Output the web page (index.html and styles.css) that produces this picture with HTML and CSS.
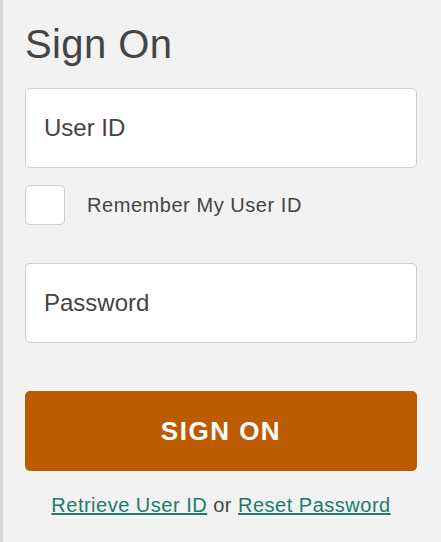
FILE: index.html
```html
<!DOCTYPE html>
<html lang="en">
<head>
  <meta charset="UTF-8">
  <meta name="viewport" content="width=device-width, initial-scale=1.0">
  <title>Sign On</title>
  <link rel="stylesheet" href="styles.css">
</head>
<body>
  <div class="signon">
    <h1>Sign On</h1>

    <input type="text" class="field" placeholder="User ID">

    <label class="remember">
      <input type="checkbox" class="check">
      <span>Remember My User ID</span>
    </label>

    <input type="password" class="field" placeholder="Password">

    <button class="submit">SIGN ON</button>

    <p class="links">
      <a href="#">Retrieve User ID</a> or <a href="#">Reset Password</a>
    </p>
  </div>
</body>
</html>
```

FILE: styles.css
```css
body {
  margin: 0;
  background: #f2f2f2;
  font-family: "Liberation Sans", Arial, sans-serif;
  color: #444;
}
.signon {
  min-height: 542px;
  box-sizing: border-box;
  border-left: 3px solid #d9d9d9;
  padding: 24px 24px 0 22px;
  display: flex;
  flex-direction: column;
}
h1 {
  margin: 0 0 24px;
  font-size: 40px;
  line-height: 40px;
  font-weight: normal;
  letter-spacing: 0.4px;
  color: #444;
}
.field {
  height: 80px;
  box-sizing: border-box;
  border: 1px solid #cfcfcf;
  border-radius: 5px;
  background: #fff;
  padding: 0 18px;
  font-family: inherit;
  font-size: 24px;
  color: #444;
  outline: none;
}
.field::placeholder {
  color: #444;
  opacity: 1;
}
.remember {
  display: flex;
  align-items: center;
  gap: 22px;
  margin: 17px 0 38px;
  font-size: 20px;
  letter-spacing: 0.55px;
}
.check {
  appearance: none;
  margin: 0;
  width: 40px;
  height: 40px;
  box-sizing: border-box;
  border: 1px solid #cfcfcf;
  border-radius: 5px;
  background: #fff;
}
.submit {
  margin-top: 48px;
  height: 80px;
  border: none;
  border-radius: 5px;
  background: #bd5b00;
  color: #fff;
  font-family: inherit;
  font-size: 26px;
  font-weight: bold;
  letter-spacing: 1.5px;
  cursor: pointer;
}
.links {
  margin: 23px 0 0;
  text-align: center;
  font-size: 20px;
  letter-spacing: 0.5px;
  color: #444;
}
.links a {
  color: #217a6b;
  text-decoration: underline;
}
```
